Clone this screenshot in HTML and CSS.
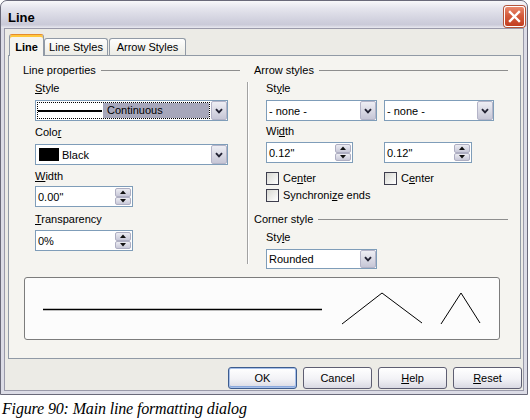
FILE: index.html
```html
<!DOCTYPE html>
<html>
<head>
<meta charset="utf-8">
<link rel="stylesheet" href="styles.css">
</head>
<body>
<div class="window">
  <div class="titlebar">
    <span class="title">Line</span>
    <div class="close">
      <svg width="19" height="19" viewBox="0 0 19 19"><path d="M5 5 L14 14 M14 5 L5 14" stroke="#fff" stroke-width="2.4" stroke-linecap="square" fill="none"/></svg>
    </div>
  </div>
  <div class="body">
    <div class="tabs">
      <div class="tab active">Line</div>
      <div class="tab t2">Line Styles</div>
      <div class="tab t3">Arrow Styles</div>
    </div>
    <div class="panel">
      <div class="columns">
        <div class="col">
          <div class="hdr">Line properties</div>
          <div class="lbl m5"><u>S</u>tyle</div>
          <div class="sel wide m5">
            <div class="focus">
              <div class="sample"><span class="sline"></span></div>
              <div class="hl">Continuous</div>
            </div>
            <div class="dd"><svg width="8" height="6" viewBox="0 0 8 6"><path d="M1 1.2 L4 4.4 L7 1.2" stroke="#222233" stroke-width="1.9" fill="none"/></svg></div>
          </div>
          <div class="lbl m5">Colo<u>r</u></div>
          <div class="sel wide m5">
            <span class="swatch"></span><span class="txt">Black</span>
            <div class="dd"><svg width="8" height="6" viewBox="0 0 8 6"><path d="M1 1.2 L4 4.4 L7 1.2" stroke="#222233" stroke-width="1.9" fill="none"/></svg></div>
          </div>
          <div class="lbl m5"><u>W</u>idth</div>
          <div class="spin lw m3">
            <span class="txt">0.00"</span>
            <div class="sb"><div class="sbh"><svg width="6" height="4" viewBox="0 0 6 4"><path d="M0 4 L3 0.5 L6 4 Z" fill="#111"/></svg></div><div class="sbh"><svg width="6" height="4" viewBox="0 0 6 4"><path d="M0 0 L3 3.5 L6 0 Z" fill="#111"/></svg></div></div>
          </div>
          <div class="lbl m6"><u>T</u>ransparency</div>
          <div class="spin lw m4">
            <span class="txt">0%</span>
            <div class="sb"><div class="sbh"><svg width="6" height="4" viewBox="0 0 6 4"><path d="M0 4 L3 0.5 L6 4 Z" fill="#111"/></svg></div><div class="sbh"><svg width="6" height="4" viewBox="0 0 6 4"><path d="M0 0 L3 3.5 L6 0 Z" fill="#111"/></svg></div></div>
          </div>
        </div>
        <div class="sep"></div>
        <div class="col">
          <div class="hdr">Arrow styles</div>
          <div class="lbl m5">St<u>y</u>le</div>
          <div class="pair m5">
            <div class="sel s1">
              <span class="txt">- none -</span>
              <div class="dd"><svg width="8" height="6" viewBox="0 0 8 6"><path d="M1 1.2 L4 4.4 L7 1.2" stroke="#222233" stroke-width="1.9" fill="none"/></svg></div>
            </div>
            <div class="sel s2">
              <span class="txt">- none -</span>
              <div class="dd"><svg width="8" height="6" viewBox="0 0 8 6"><path d="M1 1.2 L4 4.4 L7 1.2" stroke="#222233" stroke-width="1.9" fill="none"/></svg></div>
            </div>
          </div>
          <div class="lbl m4">Wi<u>d</u>th</div>
          <div class="pair m4">
            <div class="spin r1">
              <span class="txt">0.12"</span>
              <div class="sb"><div class="sbh"><svg width="6" height="4" viewBox="0 0 6 4"><path d="M0 4 L3 0.5 L6 4 Z" fill="#111"/></svg></div><div class="sbh"><svg width="6" height="4" viewBox="0 0 6 4"><path d="M0 0 L3 3.5 L6 0 Z" fill="#111"/></svg></div></div>
            </div>
            <div class="spin r2">
              <span class="txt">0.12"</span>
              <div class="sb"><div class="sbh"><svg width="6" height="4" viewBox="0 0 6 4"><path d="M0 4 L3 0.5 L6 4 Z" fill="#111"/></svg></div><div class="sbh"><svg width="6" height="4" viewBox="0 0 6 4"><path d="M0 0 L3 3.5 L6 0 Z" fill="#111"/></svg></div></div>
            </div>
          </div>
          <div class="pair m8">
            <div class="chk"><span class="box"></span><span>Ce<u>n</u>ter</span></div>
            <div class="chk"><span class="box"></span><span>C<u>e</u>nter</span></div>
          </div>
          <div class="chk ind m3"><span class="box"></span><span>Synchroni<u>z</u>e ends</span></div>
          <div class="hdr m11">Corner style</div>
          <div class="lbl m5">Sty<u>l</u>e</div>
          <div class="sel s1 short m5">
            <span class="txt">Rounded</span>
            <div class="dd"><svg width="8" height="6" viewBox="0 0 8 6"><path d="M1 1.2 L4 4.4 L7 1.2" stroke="#222233" stroke-width="1.9" fill="none"/></svg></div>
          </div>
        </div>
      </div>
      <div class="preview">
        <svg width="474" height="61" viewBox="0 0 474 61">
          <line x1="18" y1="31.5" x2="297" y2="31.5" stroke="#000" stroke-width="1.4"/>
          <polyline points="317,46 357,15 397,45" fill="none" stroke="#000" stroke-width="1"/>
          <polyline points="416,46 436,15 455,45" fill="none" stroke="#000" stroke-width="1"/>
        </svg>
      </div>
    </div>
    <div class="buttons">
      <div class="btn default">OK</div>
      <div class="btn">Cancel</div>
      <div class="btn"><u>H</u>elp</div>
      <div class="btn"><u>R</u>eset</div>
    </div>
  </div>
</div>
<div class="caption">Figure 90: Main line formatting dialog</div>
</body>
</html>
```
FILE: styles.css
```css
* { box-sizing: border-box; }
body {
  margin: 0;
  background: #fff;
  font-family: "Liberation Sans", Arial, sans-serif;
  font-size: 11px;
  color: #000;
}
u { text-decoration: underline; text-underline-offset: 1px; }

.window {
  width: 528px;
  height: 395px;
  border: 1px solid #6a6a7a;
  border-radius: 7px 7px 0 0;
  background: #dcdce6;
  padding: 0 3px 3px 3px;
  display: flex;
  flex-direction: column;
  overflow: hidden;
}
.titlebar {
  height: 27px;
  margin: 0 -3px;
  padding: 0 2px 0 7px;
  display: flex;
  justify-content: space-between;
  align-items: flex-start;
  border-radius: 6px 6px 0 0;
  background: linear-gradient(#f8f8fa 0%, #e6e6ee 25%, #d6d6e2 60%, #cacad8 88%, #e9e9f0 100%);
}
.title {
  margin-top: 9px;
  font-size: 13px;
  line-height: 15px;
  font-weight: bold;
}
.close {
  margin-top: 5px;
  width: 21px;
  height: 21px;
  border: 1px solid #fff;
  border-radius: 3px;
  background: linear-gradient(#ea8a6e, #d45c3d 45%, #c23e20);
  box-shadow: 0 0 0 1px #b4543a;
  display: flex;
  align-items: center;
  justify-content: center;
}

.body {
  flex: 1;
  background: #ecebe6;
  border: 1px solid #9a9aaa;
  padding: 0 1px 0 3px;
  display: flex;
  flex-direction: column;
}
.tabs {
  height: 26px;
  padding: 5px 0 0 1px;
  display: flex;
  align-items: flex-end;
}
.tab {
  height: 17px;
  border: 1px solid #919aa6;
  border-bottom: none;
  border-radius: 3px 3px 0 0;
  background: linear-gradient(#fefefe, #ecece6);
  display: flex;
  align-items: center;
  justify-content: center;
}
.tab.active {
  width: 35px;
  height: 22px;
  margin-bottom: -1px;
  padding-top: 3px;
  align-items: flex-start;
  font-weight: bold;
  background: #f5f4f0;
  border-top: 1px solid #e68b2c;
  box-shadow: inset 0 2px 0 #ffc83c;
  position: relative;
  z-index: 2;
  line-height: 13px;
}
.tab.active { padding-top: 6px; }
.t2 { width: 64px; margin-left: 0; }
.t3 { width: 77px; margin-left: 1px; }

.panel {
  width: 513px;
  height: 304px;
  border: 1px solid #919aa6;
  background: #f5f4f0;
  padding: 8px 11px 0 14px;
  display: flex;
  flex-direction: column;
}
.columns {
  display: grid;
  grid-template-columns: 217px 14px 254px;
  align-items: start;
}
.col { display: flex; flex-direction: column; }
.hdr {
  display: flex;
  align-items: center;
  height: 13px;
  line-height: 13px;
  white-space: nowrap;
}
.hdr::after {
  content: "";
  flex: 1;
  height: 1px;
  background: #8e8e8e;
  margin-left: 5px;
}
.lbl { height: 13px; line-height: 13px; margin-left: 12px; white-space: nowrap; }
.m3 { margin-top: 3px; }
.m4 { margin-top: 4px; }
.m5 { margin-top: 5px; }
.m6 { margin-top: 6px; }
.m8 { margin-top: 8px; }
.m11 { margin-top: 11px; }

.sel {
  height: 21px;
  border: 1px solid #7f9db9;
  background: #fff;
  display: flex;
  align-items: center;
}
.sel.wide { width: 193px; margin-left: 12px; }
.sel.s1 { width: 111px; }
.sel.s2 { width: 110px; }
.sel.short { height: 20px; margin-left: 12px; }
.txt { flex: 1; padding-left: 2px; white-space: nowrap; overflow: hidden; }
.dd {
  width: 16px;
  height: 19px;
  margin-left: auto;
  border: 1px solid #b4b4c8;
  border-radius: 2px;
  background: linear-gradient(#eeeef4, #c6c6d6);
  display: flex;
  align-items: center;
  justify-content: center;
  flex: none;
}
.sel.short .dd { height: 18px; }
.focus {
  flex: 1;
  height: 17px;
  margin: 0 1px;
  border: 1px dotted #000;
  display: flex;
}
.sample {
  width: 65px;
  background: #fff;
  display: flex;
  align-items: center;
}
.sline { display: block; width: 64px; height: 2px; background: #000; }
.hl {
  flex: 1;
  background: #a7a7bb;
  padding-left: 4px;
  line-height: 15px;
}
.swatch {
  width: 20px;
  height: 13px;
  background: #000;
  margin-left: 3px;
  flex: none;
}
.swatch + .txt { padding-left: 3px; }

.spin {
  height: 21px;
  border: 1px solid #7f9db9;
  background: #fff;
  display: flex;
  align-items: center;
}
.spin.lw { width: 98px; margin-left: 12px; }
.spin.r1 { width: 87px; }
.spin.r2 { width: 88px; }
.sb {
  width: 16px;
  height: 17px;
  margin-right: 1px;
  display: flex;
  flex-direction: column;
  flex: none;
}
.sbh {
  flex: 1;
  border: 1px solid #aeaec2;
  border-radius: 2px;
  background: linear-gradient(#ececf2, #c8c8d8);
  display: flex;
  align-items: center;
  justify-content: center;
}

.pair {
  display: grid;
  grid-template-columns: 118px 110px;
  margin-left: 12px;
}
.chk {
  height: 14px;
  display: flex;
  align-items: center;
  gap: 4px;
  white-space: nowrap;
}
.chk.ind { margin-left: 12px; }
.box {
  width: 13px;
  height: 13px;
  border: 1px solid #3e3e4e;
  background: linear-gradient(135deg, #d8d8d2, #ffffff);
  flex: none;
}

.sep {
  margin-top: 18px;
  margin-left: 7px;
  width: 2px;
  height: 182px;
  border-left: 1px solid #a2a2a2;
  border-right: 1px solid #ffffff;
}

.preview {
  margin-top: 8px;
  margin-left: 1px;
  width: 476px;
  height: 63px;
  border: 1px solid #7c7c7c;
  border-radius: 3px;
  background: #fcfcfc;
  display: flex;
}

.buttons {
  margin-top: 8px;
  display: flex;
  justify-content: flex-end;
  gap: 6px;
}
.btn {
  width: 69px;
  height: 22px;
  border: 1px solid #5e5e72;
  border-radius: 3px;
  background: linear-gradient(#ffffff, #f2f2f6 55%, #d9d9e3);
  display: flex;
  align-items: center;
  justify-content: center;
}
.btn.default {
  border-color: #3d5c8e;
  box-shadow: inset 0 0 0 1px #a7c0ea, inset 0 -1px 0 1px #8aa8dc;
}

.caption {
  padding: 5px 0 0 2px;
  font-family: "Liberation Serif", "Times New Roman", serif;
  font-style: italic;
  font-size: 16px;
  line-height: 18px;
  letter-spacing: -0.15px;
}
```
